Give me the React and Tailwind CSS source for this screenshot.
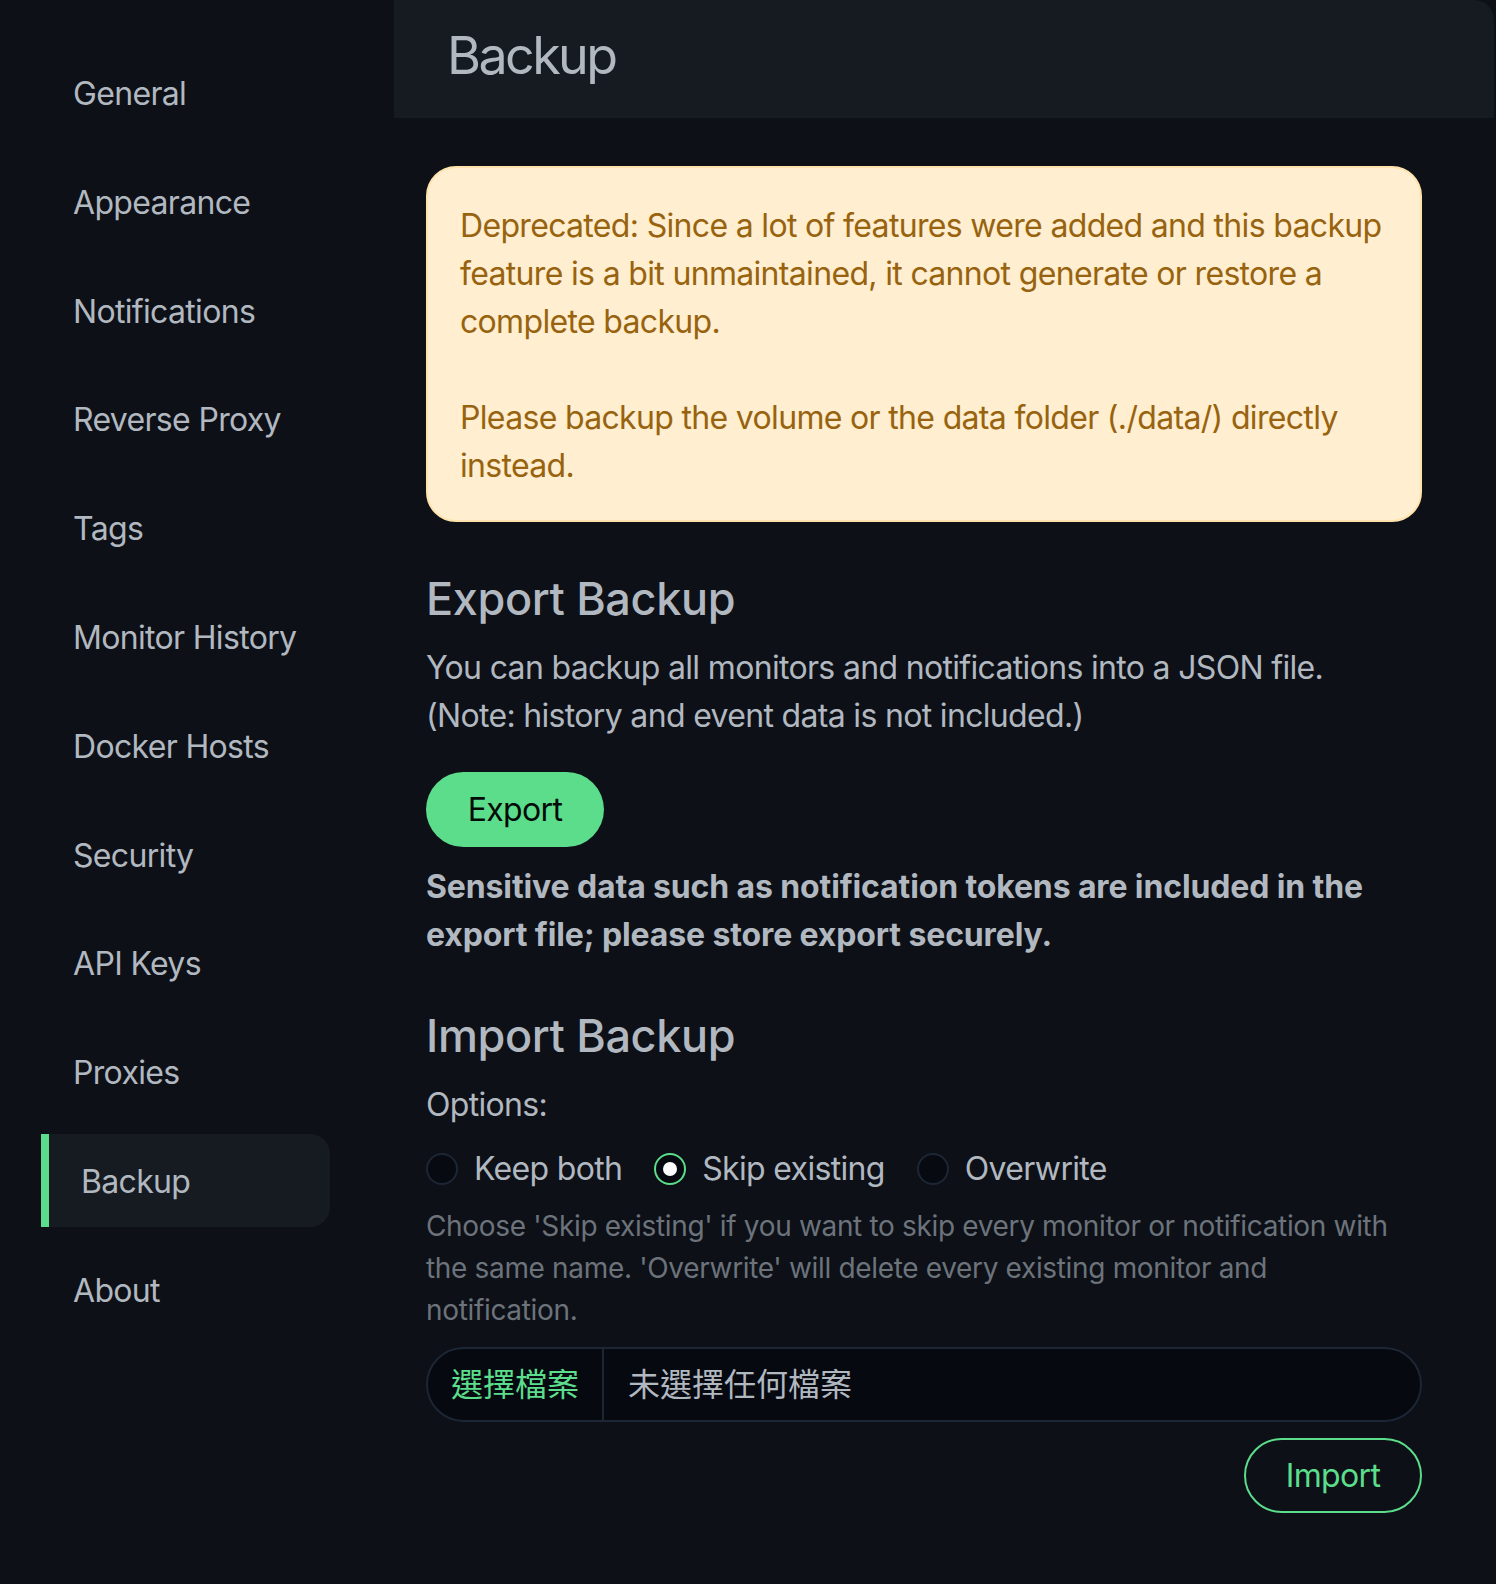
import React, { useState } from 'react';

const menu = [
  'General',
  'Appearance',
  'Notifications',
  'Reverse Proxy',
  'Tags',
  'Monitor History',
  'Docker Hosts',
  'Security',
  'API Keys',
  'Proxies',
  'Backup',
  'About',
];

const Radio = ({ checked, label, onClick }) => (
  <label className="mr-[32px] inline-flex h-[48px] cursor-pointer items-center" onClick={onClick}>
    <span
      className={`mr-[16px] flex h-[32px] w-[32px] items-center justify-center rounded-full border-2 bg-[#070a10] ${
        checked ? 'border-[#5cdd8b]' : 'border-[#1d2634]'
      }`}
    >
      {checked && <span className="h-[14px] w-[14px] rounded-full bg-white" />}
    </span>
    <span>{label}</span>
  </label>
);

const App = () => {
  const [mode, setMode] = useState('skip');

  return (
    <div
      className="flex min-h-screen bg-[#0d1017] text-[32px] leading-[48px] tracking-[-0.021em] text-[#b1b8c0]"
      style={{ fontFamily: 'Inter, "Noto Sans CJK TC", sans-serif' }}
    >
      {/* Left side: settings menu */}
      <aside className="flex w-[394px] shrink-0 flex-col gap-4 pt-[46px]">
        {menu.map((item) =>
          item === 'Backup' ? (
            <div
              key={item}
              className="ml-[41px] w-[289px] whitespace-nowrap rounded-r-[20px] border-l-[8px] border-[#5cdd8b] bg-[#161b22] px-[32px] pb-[20.8px] pt-[24px]"
            >
              {item}
            </div>
          ) : (
            <div key={item} className="ml-[41px] w-[289px] whitespace-nowrap px-[32px] pb-[20.8px] pt-[24px]">
              {item}
            </div>
          )
        )}
      </aside>

      {/* Right side: page */}
      <main className="mr-[2px] flex-1">
        <div className="rounded-tr-[20px] bg-[#161b22] pb-[23px] pl-[53px] pt-[17px] text-[52px] leading-[78px] tracking-[-0.05em]">
          Backup
        </div>

        <div className="pl-[32px] pr-[72px] pt-[48px]">
          <div className="rounded-[30px] border-2 border-[#ffe3ad] bg-[#ffeecf] px-[32px] pb-[30px] pt-[34px] text-[#98630f]">
            Deprecated: Since a lot of features were added and this backup feature is a bit unmaintained, it
            cannot generate or restore a complete backup.
            <br />
            <br />
            Please backup the volume or the data folder (./data/) directly instead.
          </div>

          <h4 className="mb-[16px] mt-[48px] text-[45px] font-medium leading-[58px] tracking-[-0.008em]">
            Export Backup
          </h4>
          <p className="mb-[32px]">
            You can backup all monitors and notifications into a JSON file.
            <br />
            (Note: history and event data is not included.)
          </p>
          <div className="mb-[16px]">
            <button className="h-[75px] w-[178px] rounded-full bg-[#5cdd8b] text-[#020b05]">Export</button>
          </div>
          <p className="font-bold tracking-[-0.004em]">
            Sensitive data such as notification tokens are included in the export file; please store export
            securely.
          </p>

          <h4 className="mb-[16px] mt-[48px] text-[45px] font-medium leading-[58px] tracking-[-0.008em]">
            Import Backup
          </h4>
          <div className="mb-[16px]">Options:</div>
          <div className="flex">
            <Radio label="Keep both" checked={mode === 'keep'} onClick={() => setMode('keep')} />
            <Radio label="Skip existing" checked={mode === 'skip'} onClick={() => setMode('skip')} />
            <Radio label="Overwrite" checked={mode === 'overwrite'} onClick={() => setMode('overwrite')} />
          </div>
          <div className="mb-[16px] mt-[12px] text-[28px] leading-[42px] tracking-[-0.012em] text-[#6c737b]">
            Choose 'Skip existing' if you want to skip every monitor or notification with the same name.
            'Overwrite' will delete every existing monitor and notification.
          </div>

          <div className="mb-[16px] flex h-[75px] overflow-hidden rounded-full border-2 border-[#1d2634] bg-[#060910] tracking-normal">
            <div className="flex w-[176px] items-center justify-center border-r-2 border-[#1d2634] text-[#5cdd8b]">
              選擇檔案
            </div>
            <div className="flex items-center pl-[24px]">未選擇任何檔案</div>
          </div>

          <div className="flex justify-end">
            <button className="h-[75px] w-[178px] rounded-full border-2 border-[#5cdd8b] text-[#5cdd8b]">
              Import
            </button>
          </div>
        </div>
      </main>
    </div>
  );
};

export default App;
